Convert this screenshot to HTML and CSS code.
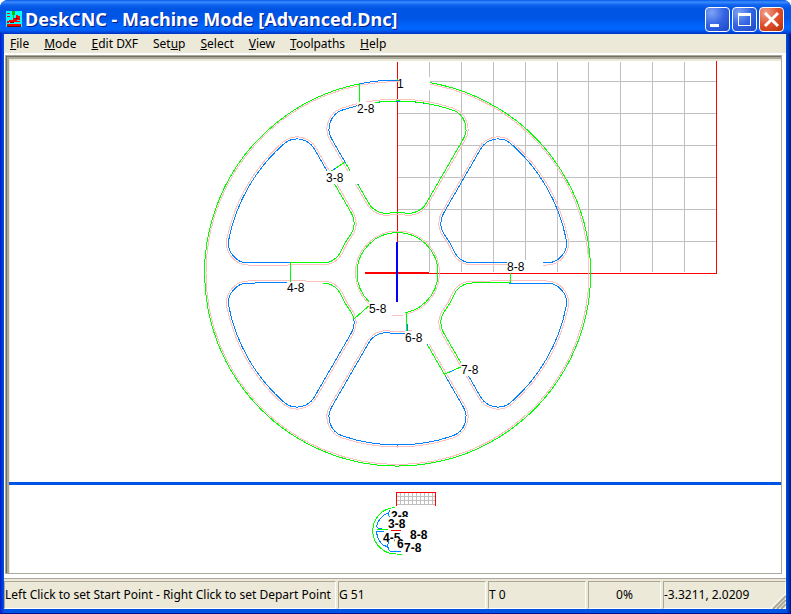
FILE: index.html
```html
<!DOCTYPE html>
<html lang="en">
<head>
<meta charset="utf-8">
<title>DeskCNC - Machine Mode [Advanced.Dnc]</title>
<link rel="stylesheet" href="styles.css">
</head>
<body>
<div class="window">
  <header class="titlebar">
    <svg class="app-icon" viewBox="0 0 16 16" shape-rendering="crispEdges" aria-hidden="true">
      <path fill="#00ffff" d="M0 0h16v16H0z"/>
      <path fill="#ff0000" d="M1 2h3v1H1zM1 5h3v1H1zM10 4h2v1h2v4h-3v1h3v1H3v1H1v-2h2V9h4V7h3zM1 13h14v2H1z"/>
      <path fill="#800000" d="M4 11h4v1H4zM9 7h3v1H9zM1 15h14v1H1z"/>
      <path fill="#00ffff" d="M5 12h5v1H5z"/>
      <path fill="#00c000" d="M6 0h3v4H8v3H7V4H6z"/>
    </svg>
    <h1 class="title">DeskCNC - Machine Mode [Advanced.Dnc]</h1>
    <div class="captions">
      <button class="cap" type="button" aria-label="Minimize"><svg viewBox="0 0 25 25"><path fill="#fff" d="M5 17h9v3H5z"/></svg></button>
      <button class="cap" type="button" aria-label="Maximize"><svg viewBox="0 0 25 25"><path fill="#fff" fill-rule="evenodd" d="M6 6h13v13H6zM7 9v9h11V9z"/></svg></button>
      <button class="cap cap-close" type="button" aria-label="Close"><svg viewBox="0 0 25 25"><path stroke="#fff" stroke-width="3" d="M6 6l13 13M19 6L6 19"/></svg></button>
    </div>
  </header>
  <nav class="menubar">
    <button type="button"><u>F</u>ile</button>
    <button type="button"><u>M</u>ode</button>
    <button type="button"><u>E</u>dit DXF</button>
    <button type="button">Set<u>u</u>p</button>
    <button type="button"><u>S</u>elect</button>
    <button type="button"><u>V</u>iew</button>
    <button type="button"><u>T</u>oolpaths</button>
    <button type="button"><u>H</u>elp</button>
  </nav>
  <main class="client">
    <div class="panes">
    <svg class="plot" viewBox="9 61 772 421" shape-rendering="crispEdges" role="img" aria-label="Toolpath plot">
      <defs>
        <path id="cut" d="M0-172A172 172 0 0 1 54.9-163A20 20 0 0 1 65.8-134L28.7-69.7A20 20 0 0 1 8.6-59.9A60.5 60.5 0 0 0-8.6-59.9A20 20 0 0 1-28.7-69.7L-65.8-134A20 20 0 0 1-54.9-163A172 172 0 0 1 0-172Z"/>
        <path id="edge" d="M0-174A174 174 0 0 1 55.5-164.9A22 22 0 0 1 67.6-133L30.4-68.7A22 22 0 0 1 8.3-57.9A58.5 58.5 0 0 0-8.3-57.9A22 22 0 0 1-30.4-68.7L-67.6-133A22 22 0 0 1-55.5-164.9A174 174 0 0 1 0-174Z"/>
      </defs>
      <path class="grid" d="M429.5 62V272M461.5 62V272M493.5 62V272M525.5 62V272M557.5 62V272M588.5 62V272M620.5 62V272M652.5 62V272M684.5 62V272M398 81.5H716M398 113.5H716M398 145.5H716M398 177.5H716M398 209.5H716M398 241.5H716"/>
      <path class="limit" d="M397.5 62V273.5H716.5V61"/>
      <g transform="translate(397.5 273)">
        <g class="part">
          <circle r="191.5"/><circle r="42"/>
          <use href="#edge"/><use href="#edge" transform="rotate(60)"/><use href="#edge" transform="rotate(120)"/><use href="#edge" transform="rotate(180)"/><use href="#edge" transform="rotate(240)"/><use href="#edge" transform="rotate(300)"/>
        </g>
        <g class="rapid">
          <use href="#cut"/><use href="#cut" transform="rotate(60)"/><use href="#cut" transform="rotate(120)"/><use href="#cut" transform="rotate(180)"/><use href="#cut" transform="rotate(240)"/><use href="#cut" transform="rotate(300)"/>
          <path d="M-38-189.2A193 193 0 0 1 0-193"/>
        </g>
        <g class="feed">
          <path d="M0-193A193 193 0 1 1-38-189.2"/>
          <circle r="40.5"/>
          <path d="M-52-110L-28.7-69.7A20 20 0 0 0-8.6-59.9A60.5 60.5 0 0 1 8.6-59.9A20 20 0 0 0 28.7-69.7L65.8-134A20 20 0 0 0 54.9-163A172 172 0 0 0-33-168.8"/>
          <path transform="rotate(-60)" d="M52.7-111.2L28.7-69.7A20 20 0 0 1 8.6-59.9A60.5 60.5 0 0 0-8.6-59.9A20 20 0 0 1-28.7-69.7L-44.7-97.5"/>
          <path transform="rotate(-120)" d="M30-72L28.7-69.7A20 20 0 0 1 8.6-59.9A60.5 60.5 0 0 0-8.6-59.9A20 20 0 0 1-18.3-60.9"/>
          <path d="M30 72L48 103"/>
          <path transform="rotate(120)" d="M-48-103L-28.7-69.7A20 20 0 0 0-8.6-59.9A60.5 60.5 0 0 1 8.6-59.9A20 20 0 0 0 28.7-69.7L46.4-100.4"/>
        </g>
      </g>
      <path class="feed" d="M359.5 83V104M345 162L330 172M290.5 262V284M371 304L354 319M406.5 312V333M445 374L463 366M510.5 273V283"/>
      <path class="rapid" d="M336 168L333 170M407.5 324V331M450 372L454 370"/>
      <path fill="#fff" d="M398 77h32v13h-32zM357 102h18v13h-18zM326 171h32v13h-32zM287 282h36v13h-36zM369 302h36v13h-36zM405 331h36v13h-36zM461 363h36v13h-36zM507 260h36v13h-36z"/>
      <path class="part" d="M392 315.5H403"/>
      <path fill="#f00" d="M365 272h64v2h-64z"/>
      <path fill="#00f" d="M396 242h2v60h-2z"/>
      <g class="labels">
        <text x="397" y="88">1</text><text x="357" y="113">2-8</text><text x="326" y="182">3-8</text><text x="287" y="292">4-8</text><text x="369" y="313">5-8</text><text x="405" y="342">6-8</text><text x="461" y="374">7-8</text><text x="507" y="271">8-8</text>
      </g>
    </svg>
    <svg class="overview" viewBox="9 485 772 88" shape-rendering="crispEdges" role="img" aria-label="Machine overview">
      <path class="grid" d="M400.5 493V505M404.5 493V505M408.5 493V505M412.5 493V505M416.5 493V505M420.5 493V505M424.5 493V505M428.5 493V505M432.5 493V505M397 496.5H435M397 500.5H435M397 504.5H435"/>
      <path class="limit" d="M396.5 506V492.5H435.5V506"/>
      <path class="feed" d="M395 507.5A23 23 0 0 0 397 554H402M377 529.5H388"/>
      <path class="rapid" d="M390 510Q387 514 390 518M388 513Q379 517 377 525Q376 529 382 529M384 531H377Q376 538 383 545L388 547M389 542Q386 547 390 551H401"/>
      <path fill="#f00" d="M391 530h10v1h-10z"/>
      <g class="labels labels-bold">
        <text x="391" y="520">2-8</text>
        <text x="383" y="542">4-5</text>
      </g>
      <path fill="#fff" d="M387 517h22v11h-22zM395 539h12v10h-12z"/>
      <g class="labels labels-bold">
        <text x="397" y="548">6</text><text x="388" y="528">3-8</text><text x="410" y="539">8-8</text><text x="404" y="552">7-8</text>
      </g>
    </svg>
    </div>
  </main>
  <footer class="statusbar">
    <div class="cell">Left Click to set Start Point - Right Click to set Depart Point</div>
    <div class="cell">G 51</div>
    <div class="cell">T 0</div>
    <div class="cell cell-center">0%</div>
    <div class="cell">-3.3211, 2.0209</div>
    <svg class="grip" viewBox="0 0 15 15" aria-hidden="true"><path stroke="#fff" d="M0 14L14 0M4 14L14 4M8 14L14 8"/><path stroke="#aca899" stroke-width="2" d="M2 15L15 2M6 15L15 6M10 15L15 10"/></svg>
  </footer>
</div>
</body>
</html>
```
FILE: styles.css
```css
* { box-sizing: border-box; }

body {
  margin: 0;
  background: #fff;
  font-family: "Noto Sans", sans-serif;
  font-size: 12px;
  color: #000;
}

.window {
  display: flex;
  flex-direction: column;
  height: 100vh;
  padding: 0 5px 4px 4px;
  background: linear-gradient(90deg, #0019cf, #0054e3 4px, #0054e3 calc(100% - 5px), #00138c);
  border-radius: 8px 8px 0 0;
  border-bottom: 1px solid #00138c;
  overflow: hidden;
}

.titlebar {
  display: flex;
  align-items: center;
  flex: none;
  height: 34px;
  margin: 0 -5px 0 -4px;
  padding: 4px 7px 0 6px;
  background: linear-gradient(#0058e6 0, #3c8cff 2px, #0d62ee 5px, #0054e3 9px, #0055e5 18px, #0066ff 27px, #0062f5 30px, #003dd7 33px, #0030b0 34px);
}

.app-icon { width: 16px; height: 16px; margin-right: 3px; }

.title {
  flex: 1;
  margin: 0;
  font: bold 18px "Noto Sans", sans-serif;
  color: #fff;
  text-shadow: 1px 1px #0a1883;
  white-space: nowrap;
}

.captions { display: flex; gap: 2px; }

.cap {
  width: 25px;
  height: 25px;
  padding: 0;
  border: 1px solid #fff;
  border-radius: 4px;
  background: radial-gradient(circle at 25% 20%, #7fa3f5, #3464e4 50%, #1c46c4);
}

.cap-close { background: radial-gradient(circle at 25% 20%, #f0a08a, #e0502c 50%, #b52d08); }
.cap svg { display: block; width: 25px; height: 25px; margin: -1px; }

.menubar {
  display: flex;
  flex: none;
  gap: 15px;
  height: 19px;
  padding: 0 6px;
  background: #ece9d8;
}

.menubar button {
  padding: 0;
  border: 0;
  background: none;
  font: 12px "Noto Sans", sans-serif;
  color: #000;
}

.client {
  display: flex;
  flex: 1;
  min-height: 0;
  padding: 2px 4px 4px 1px;
  background: #fff;
}

.panes {
  display: grid;
  grid-template-rows: 424fr 88fr;
  flex: 1;
  min-width: 0;
  padding: 6px 0 0 4px;
  border: 0 solid #aca899;
  border-width: 0 1px 1px 0;
  box-shadow: inset 1px 1px #aca899, inset 2px 2px #716f64, inset 4px 4px #aca899, inset 5px 6px #ece9d8;
}

.plot, .overview { display: block; width: 100%; height: 100%; min-height: 0; }
.plot { border-bottom: 3px solid #0054e3; }

.grid { fill: none; stroke: #c0c0c0; }
.limit { fill: none; stroke: #f00; }
.part { fill: none; stroke: #ffc0c0; }
.rapid { fill: none; stroke: #0080ff; }
.feed { fill: none; stroke: #0f0; }
.labels { font: 12px "Liberation Sans", sans-serif; fill: #000; }
.labels-bold { font-weight: bold; }

.statusbar {
  position: relative;
  display: grid;
  grid-template-columns: 332fr 148fr 98fr 73fr 123fr;
  gap: 2px;
  flex: none;
  height: 31px;
  padding-top: 2px;
  background: #ece9d8;
  border-top: 1px solid #aca899;
}

.cell {
  min-width: 0;
  overflow: hidden;
  border: 1px solid;
  border-color: #aca899 #fff #fff #aca899;
  line-height: 26px;
  white-space: nowrap;
}

.cell-center { text-align: center; }

.grip { position: absolute; right: 0; bottom: 0; width: 15px; height: 15px; }
```
